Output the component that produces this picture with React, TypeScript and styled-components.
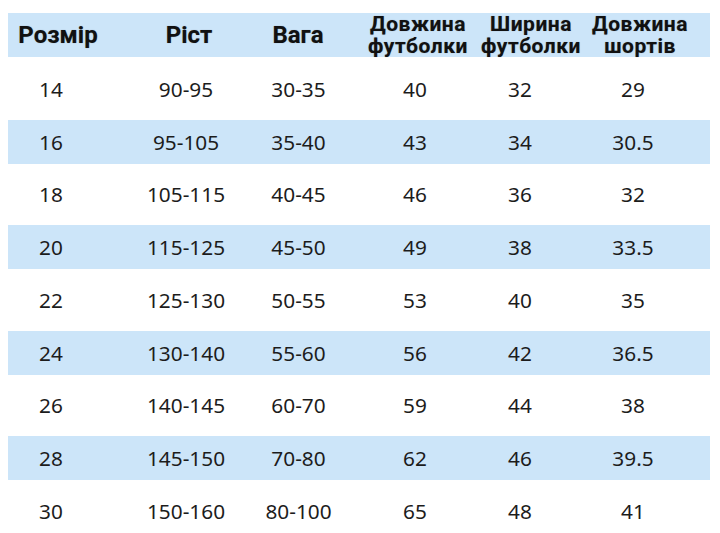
import React from 'react';
import styled, {createGlobalStyle} from 'styled-components';

const GlobalStyle = createGlobalStyle`
  html, body {
    margin: 0;
    padding: 0;
    background: #ffffff;
  }
`

const headerCols = '100px 162px 56px 184px 42px 176px';
const dataCols = '86px 184px 41px 192px 18px 208px';

const headers: string[][] = [
    ['Розмір'],
    ['Ріст'],
    ['Вага'],
    ['Довжина', 'футболки'],
    ['Ширина', 'футболки'],
    ['Довжина', 'шортів'],
];

const rows: string[][] = [
    ['14', '90-95', '30-35', '40', '32', '29'],
    ['16', '95-105', '35-40', '43', '34', '30.5'],
    ['18', '105-115', '40-45', '46', '36', '32'],
    ['20', '115-125', '45-50', '49', '38', '33.5'],
    ['22', '125-130', '50-55', '53', '40', '35'],
    ['24', '130-140', '55-60', '56', '42', '36.5'],
    ['26', '140-145', '60-70', '59', '44', '38'],
    ['28', '145-150', '70-80', '62', '46', '39.5'],
    ['30', '150-160', '80-100', '65', '48', '41'],
];

export default function App() {
    return (
        <>
            <GlobalStyle/>
            <Table>
                <HeaderRow $cols={headerCols}>
                    {headers.map((lines, i) => (
                        <HeadCell key={i} $big={lines.length === 1}>
                            {lines.map((l) => <span key={l}>{l}</span>)}
                        </HeadCell>
                    ))}
                </HeaderRow>
                {rows.map((r, i) => (
                    <DataRow key={r[0]}>
                        <Band $cols={dataCols} $shaded={i % 2 === 1}>
                            {r.map((v, j) => <Cell key={j}>{v}</Cell>)}
                        </Band>
                    </DataRow>
                ))}
            </Table>
        </>
    );
}

const Table = styled.div`
  width: 702px;
  padding: 13px 10px 0 8px;
  display: flex;
  flex-direction: column;
`

const HeaderRow = styled.div<{ $cols: string }>`
  display: grid;
  grid-template-columns: ${p => p.$cols};
  align-items: center;
  height: 44px;
  margin-bottom: 5.6px;
  background: #cce5f9;
`

const HeadCell = styled.div<{ $big: boolean }>`
  display: flex;
  flex-direction: column;
  align-items: center;
  min-width: 0;
  white-space: nowrap;
  font-family: Roboto, "Noto Sans", sans-serif;
  font-weight: 700;
  font-size: ${p => p.$big ? '24px' : '21px'};
  letter-spacing: ${p => p.$big ? '0' : '0.5px'};
  line-height: 22px;
  color: #111;
  text-shadow: 0 0 1px rgba(0, 0, 0, 0.35);
`

const DataRow = styled.div`
  height: 52.75px;
  padding: 4.4px 0;
  box-sizing: border-box;
`

const Band = styled.div<{ $cols: string; $shaded: boolean }>`
  display: grid;
  grid-template-columns: ${p => p.$cols};
  align-items: center;
  height: 100%;
  background: ${p => p.$shaded ? '#cce5f9' : 'transparent'};
`

const Cell = styled.div`
  display: flex;
  justify-content: center;
  min-width: 0;
  white-space: nowrap;
  font-family: "Noto Sans", sans-serif;
  font-size: 20.8px;
  color: #1c1c1c;
`
